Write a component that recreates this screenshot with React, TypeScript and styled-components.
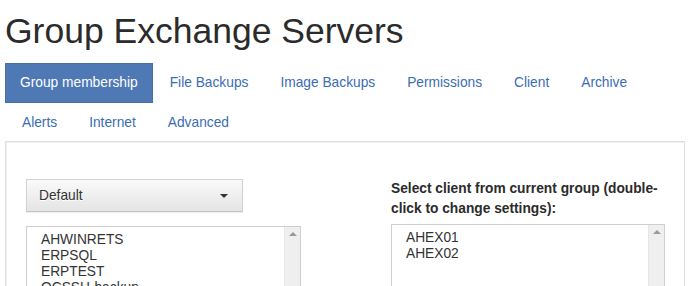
import React from 'react';
import styled, { createGlobalStyle } from 'styled-components';

const GlobalStyle = createGlobalStyle`
  html, body {
    margin: 0;
    padding: 0;
    background: #fff;
    font-family: "Liberation Sans", Arial, sans-serif;
    font-size: 13.75px;
    color: #333;
  }
`;

const Page = styled.div`
  padding: 0 5px;
  width: 680px;
  height: 286px;
  overflow: hidden;
`;

const Title = styled.h1`
  margin: 12px 0 12px;
  font-size: 35.5px;
  font-weight: 400;
  line-height: 1.1;
  color: #2b2b2b;
`;

const Nav = styled.ul`
  display: flex;
  flex-wrap: wrap;
  list-style: none;
  margin: 0 0 -1px;
  padding: 0;
`;

const NavItem = styled.li<{ $active?: boolean }>`
  & + & {
    margin-left: 2px;
  }
  a {
    display: block;
    padding: 10px 15px 9.5px;
    line-height: 20px;
    text-decoration: none;
    color: ${(p) => (p.$active ? '#fff' : '#3b6db3')};
    background: ${(p) => (p.$active ? '#4e79b5' : 'transparent')};
    box-shadow: ${(p) => (p.$active ? 'inset 0 0 0 1px #466fa9' : 'none')};
  }
`;

const Panel = styled.div`
  position: relative;
  border: 1px solid #dedede;
  box-shadow: inset 1px 1px 0 #f0f0f0;
  padding: 37px 20px 20px;
  display: grid;
  grid-template-columns: 365px 272px;
  min-height: 200px;
`;

const Column = styled.div`
  display: flex;
  flex-direction: column;
  align-items: flex-start;
`;

const DropButton = styled.button`
  width: 217px;
  height: 33px;
  margin-bottom: 14px;
  padding: 0 13px 0 12px;
  display: flex;
  align-items: center;
  justify-content: space-between;
  font-family: inherit;
  font-size: 13.75px;
  color: #333;
  text-shadow: 0 1px 0 #fff;
  border: 1px solid #d2d2d2;
  border-bottom-color: #c4c4c4;
  border-radius: 0;
  background: linear-gradient(to bottom, #fafafa 0, #e4e4e4 100%);
  box-shadow: 0 1px 1px rgba(0, 0, 0, 0.06);
`;

const Caret = styled.span`
  width: 0;
  height: 0;
  margin-right: 1px;
  border-top: 4px solid #333;
  border-left: 4px solid transparent;
  border-right: 4px solid transparent;
`;

const Label = styled.label`
  display: block;
  font-weight: 700;
  line-height: 20px;
  margin: 0 0 5px;
  color: #2b2b2b;
`;

const ListBox = styled.div<{ $width: number }>`
  width: ${(p) => p.$width}px;
  height: 160px;
  border: 1px solid #cfcfcf;
  display: flex;
  background: #fff;
`;

const Options = styled.div`
  flex: 1;
  padding: 5px 12px;
`;

const Option = styled.div`
  padding: 0 2px;
  line-height: 16px;
  color: #333;
`;

const ScrollTrack = styled.div`
  width: 15px;
  background: #efefef;
  border-left: 1px solid #e6e6e6;
  display: flex;
  justify-content: center;
  padding-top: 5px;
`;

const ArrowUp = styled.span`
  width: 0;
  height: 0;
  border-bottom: 4px solid #9a9a9a;
  border-left: 4px solid transparent;
  border-right: 4px solid transparent;
`;

const tabs = ['Group membership', 'File Backups', 'Image Backups', 'Permissions', 'Client', 'Archive', 'Alerts', 'Internet', 'Advanced'];

function List({ items, width }: { items: string[]; width: number }) {
  return (
    <ListBox $width={width}>
      <Options>
        {items.map((it) => (
          <Option key={it}>{it}</Option>
        ))}
      </Options>
      <ScrollTrack>
        <ArrowUp />
      </ScrollTrack>
    </ListBox>
  );
}

export default function App() {
  return (
    <Page>
      <GlobalStyle />
      <Title>Group Exchange Servers</Title>
      <Nav>
        {tabs.map((t, i) => (
          <NavItem key={t} $active={i === 0}>
            <a href="#">{t}</a>
          </NavItem>
        ))}
      </Nav>
      <Panel>
        <Column>
          <DropButton>
            <span>Default</span>
            <Caret />
          </DropButton>
          <List width={273} items={['AHWINRETS', 'ERPSQL', 'ERPTEST', 'OCSSH-backup', 'SRV-FILE01']} />
        </Column>
        <Column>
          <Label>Select client from current group (double-click to change settings):</Label>
          <List width={272} items={['AHEX01', 'AHEX02']} />
        </Column>
      </Panel>
    </Page>
  );
}
